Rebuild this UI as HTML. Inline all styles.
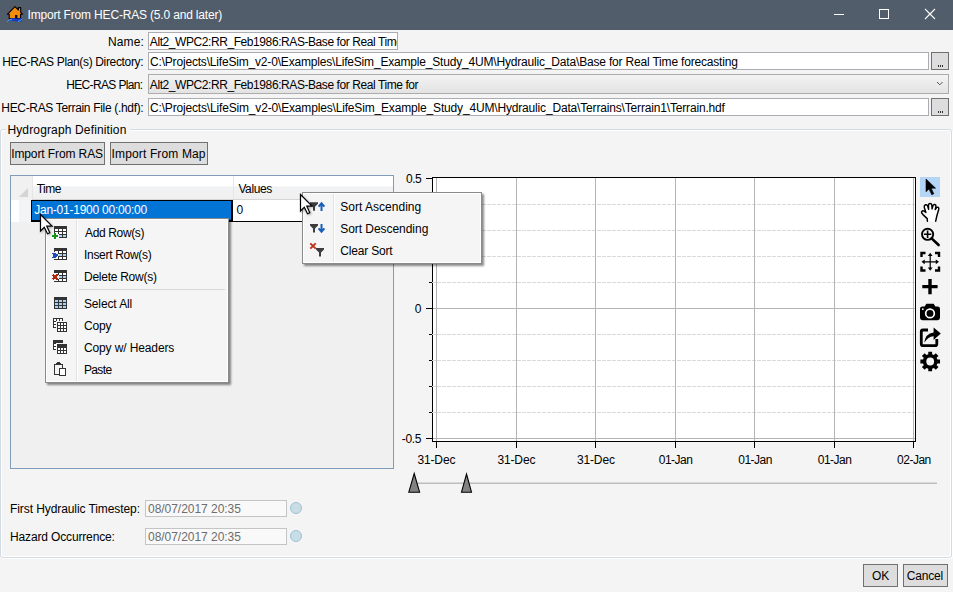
<!DOCTYPE html>
<html><head><meta charset="utf-8">
<style>
*{margin:0;padding:0;box-sizing:border-box}
html,body{width:953px;height:592px;overflow:hidden;background:#f4f4f4;font-family:"Liberation Sans",sans-serif;font-size:12px;color:#000}
.a{position:absolute}
.t{position:absolute;white-space:pre;line-height:14px}
.tb{position:absolute;border:1px solid #abadb3;background:#fff}
.btn{position:absolute;border:1px solid #707070;background:#dddddd}
.menu{position:absolute;border:1px solid #8a8a8a;background:#f5f5f5;box-shadow:inset 1px 1px 0 #fff,inset -1px -1px 0 #fff,2px 2px 2px rgba(0,0,0,0.45)}
.hl{position:absolute;height:1px}
.vl{position:absolute;width:1px}
</style></head><body>
<!-- title bar -->
<div class="a" style="left:0;top:0;width:953px;height:30px;background:#525d6b"></div>
<svg class="a" style="left:0;top:0" width="30" height="30" viewBox="0 0 30 30">
  <path d="M7.3 14.3 L15 6.6 L18.4 10 L18.4 7.6 L20.7 7.6 L20.7 12.3 L22.6 14.2 L20.5 14.2 L20.5 18.5 L9.2 18.5 L9.2 14.3 Z" fill="#f28c0c" stroke="#000" stroke-width="1.1" stroke-linejoin="round"/>
  <rect x="15" y="15" width="2.4" height="3.5" fill="#111"/>
  <path d="M7 21.8 Q10 17.2 15 18.2 Q19.5 19.2 22.2 17.4 Q22.4 20.5 21.3 21.6 Q17.5 22.2 14 21 Q10 20 7 21.8 Z" fill="#1a3cc0"/>
  <path d="M7 21.8 Q9 19.3 12 19.3" stroke="#4aa8e8" stroke-width="1" fill="none"/>
  <path d="M18 21.4 Q20.5 21.2 22.2 18.6" stroke="#4aa8e8" stroke-width="1" fill="none"/>
</svg>
<div class="t" style="left:27.5px;top:8px;letter-spacing:-0.174px;color:#fff;">Import From HEC-RAS (5.0 and later)</div>
<div class="a" style="left:834px;top:14px;width:10px;height:1px;background:#fff"></div>
<div class="a" style="left:879px;top:9px;width:10px;height:10px;border:1px solid #fff"></div>
<svg class="a" style="left:924px;top:8px" width="13" height="13" viewBox="0 0 13 13"><path d="M1 1L11 11M11 1L1 11" stroke="#fff" stroke-width="1.1"/></svg>

<!-- form rows -->
<div class="t" style="left:107.9px;top:35px;letter-spacing:0.150px;color:#000;">Name:</div>
<div class="tb" style="left:148px;top:32px;width:250px;height:18px;overflow:hidden"><div class="t" style="left:0.8px;top:2px;letter-spacing:-0.420px">Alt2_WPC2:RR_Feb1986:RAS-Base for Real Time</div></div>
<div class="t" style="left:2.2px;top:55px;letter-spacing:-0.348px;color:#000;">HEC-RAS Plan(s) Directory:</div>
<div class="tb" style="left:148px;top:52px;width:781px;height:18px"></div>
<div class="t" style="left:150.0px;top:55px;letter-spacing:-0.183px;color:#000;">C:\Projects\LifeSim_v2-0\Examples\LifeSim_Example_Study_4UM\Hydraulic_Data\Base for Real Time forecasting</div>
<div class="btn" style="left:931px;top:52px;width:18px;height:18px"><div class="a" style="left:6px;top:12px;width:1px;height:2px;background:#333"></div><div class="a" style="left:8px;top:12px;width:1px;height:2px;background:#333"></div><div class="a" style="left:10px;top:12px;width:1px;height:2px;background:#333"></div></div>
<div class="t" style="left:66.2px;top:78px;letter-spacing:-0.642px;color:#000;">HEC-RAS Plan:</div>
<div class="a" style="left:148px;top:74px;width:801px;height:20px;border:1px solid #acacac;background:linear-gradient(#f4f4f4 0,#ededed 35%,#e3e3e3 100%)">
<svg class="a" style="left:787px;top:6px" width="8" height="6" viewBox="0 0 8 6"><path d="M1 1L3.8 3.8L6.6 1" fill="none" stroke="#555" stroke-width="1"/></svg></div>
<div class="t" style="left:149.8px;top:78px;letter-spacing:-0.420px;color:#000;">Alt2_WPC2:RR_Feb1986:RAS-Base for Real Time for</div>
<div class="t" style="left:1.3px;top:101px;letter-spacing:-0.326px;color:#000;">HEC-RAS Terrain File (.hdf):</div>
<div class="tb" style="left:148px;top:98px;width:781px;height:18px"></div>
<div class="t" style="left:150.0px;top:101px;letter-spacing:-0.168px;color:#000;">C:\Projects\LifeSim_v2-0\Examples\LifeSim_Example_Study_4UM\Hydraulic_Data\Terrains\Terrain1\Terrain.hdf</div>
<div class="btn" style="left:931px;top:98px;width:18px;height:18px"><div class="a" style="left:6px;top:12px;width:1px;height:2px;background:#333"></div><div class="a" style="left:8px;top:12px;width:1px;height:2px;background:#333"></div><div class="a" style="left:10px;top:12px;width:1px;height:2px;background:#333"></div></div>

<!-- group box -->
<div class="a" style="left:0px;top:129px;width:952px;height:429px;border:1px solid #d0dbe3;border-radius:3px;box-shadow:inset 1px 1px 0 #fff,inset -1px -1px 0 #fff,1px 1px 0 #fff"></div>
<div class="a" style="left:6px;top:124px;width:124px;height:10px;background:#f4f4f4"></div>
<div class="t" style="left:7.4px;top:123px;letter-spacing:0.145px;color:#000;">Hydrograph Definition</div>
<div class="btn" style="left:10px;top:142px;width:95px;height:23px"></div>
<div class="t" style="left:11.2px;top:147px;letter-spacing:-0.107px;color:#000;">Import From RAS</div>
<div class="btn" style="left:110px;top:142px;width:98px;height:23px"></div>
<div class="t" style="left:111.6px;top:147px;letter-spacing:0.136px;color:#000;">Import From Map</div>

<!-- grid -->
<div class="a" style="left:10px;top:175px;width:384px;height:294px;border:1px solid #7f9db9;background:#f0f0f0"></div>
<div class="a" style="left:11px;top:176px;width:382px;height:24px;background:linear-gradient(#ffffff 0%,#ffffff 40%,#f1f2f4 45%,#f0f0f0 100%)"></div>
<div class="a" style="left:11px;top:176px;width:21px;height:45px;background:#f1f1f1"></div>
<div class="a" style="left:11px;top:200px;width:20px;height:22px;background:linear-gradient(to right,#fff 0,#fff 8px,#f3f4f6 8px,#f3f4f6 100%)"></div>
<svg class="a" style="left:17px;top:186px" width="12" height="12" viewBox="0 0 12 12"><path d="M11 2 L11 11 L2 11 Z" fill="#d4d4d4"/></svg>
<div class="vl" style="left:32px;top:176px;height:24px;background:#e6e6e6"></div>
<div class="vl" style="left:233px;top:176px;height:24px;background:#e6e6e6"></div>
<div class="hl" style="left:32px;top:199px;width:361px;background:#d5d5d5"></div>
<div class="a" style="left:233px;top:200px;width:160px;height:22px;background:#fff"></div>
<div class="a" style="left:31px;top:200px;width:202px;height:22px;background:#0274d6;border:1px solid #000;border-right-width:2px;border-bottom-width:2px"></div>
<div class="hl" style="left:233px;top:221px;width:160px;background:#000"></div>
<div class="t" style="left:36.8px;top:182px;letter-spacing:-0.567px;color:#000;">Time</div>
<div class="t" style="left:238.4px;top:182px;letter-spacing:-0.380px;color:#000;">Values</div>
<div class="t" style="left:34.2px;top:203px;letter-spacing:-0.237px;color:#fff;">Jan-01-1900 00:00:00</div>
<div class="t" style="left:236.5px;top:203px;letter-spacing:0.000px;color:#000;">0</div>

<!-- chart -->
<div class="a" style="left:432px;top:177px;width:484px;height:265px;border:1px solid #000;background:#fff"></div>
<div id="chartgrid"></div>
<svg class="a" style="left:0;top:0" width="953" height="592">
  <g stroke="#dadada" stroke-width="1" stroke-dasharray="4,1">
    <line x1="432" y1="204.5" x2="915" y2="204.5"/>
    <line x1="432" y1="230.5" x2="915" y2="230.5"/>
    <line x1="432" y1="256.5" x2="915" y2="256.5"/>
    <line x1="432" y1="282.5" x2="915" y2="282.5"/>
    <line x1="432" y1="334.5" x2="915" y2="334.5"/>
    <line x1="432" y1="360.5" x2="915" y2="360.5"/>
    <line x1="432" y1="386.5" x2="915" y2="386.5"/>
    <line x1="432" y1="412.5" x2="915" y2="412.5"/>
  </g>
  <g stroke="#b4b4b4" stroke-width="1">
    <line x1="433" y1="308.5" x2="915" y2="308.5"/>
    <line x1="433" y1="438.5" x2="915" y2="438.5"/>
    <line x1="436.5" y1="178" x2="436.5" y2="441"/>
    <line x1="516.5" y1="178" x2="516.5" y2="441"/>
    <line x1="595.5" y1="178" x2="595.5" y2="441"/>
    <line x1="675.5" y1="178" x2="675.5" y2="441"/>
    <line x1="754.5" y1="178" x2="754.5" y2="441"/>
    <line x1="834.5" y1="178" x2="834.5" y2="441"/>
    <line x1="913.5" y1="178" x2="913.5" y2="441"/>
  </g>
  <g stroke="#000" stroke-width="1">
    <line x1="426" y1="178.5" x2="432" y2="178.5"/>
    <line x1="426" y1="308.5" x2="432" y2="308.5"/>
    <line x1="426" y1="438.5" x2="432" y2="438.5"/>
    <line x1="429" y1="204.5" x2="432" y2="204.5"/>
    <line x1="429" y1="230.5" x2="432" y2="230.5"/>
    <line x1="429" y1="256.5" x2="432" y2="256.5"/>
    <line x1="429" y1="282.5" x2="432" y2="282.5"/>
    <line x1="429" y1="334.5" x2="432" y2="334.5"/>
    <line x1="429" y1="360.5" x2="432" y2="360.5"/>
    <line x1="429" y1="386.5" x2="432" y2="386.5"/>
    <line x1="429" y1="412.5" x2="432" y2="412.5"/>
    <line x1="436.5" y1="442" x2="436.5" y2="448"/>
    <line x1="516.5" y1="442" x2="516.5" y2="448"/>
    <line x1="595.5" y1="442" x2="595.5" y2="448"/>
    <line x1="675.5" y1="442" x2="675.5" y2="448"/>
    <line x1="754.5" y1="442" x2="754.5" y2="448"/>
    <line x1="834.5" y1="442" x2="834.5" y2="448"/>
    <line x1="913.5" y1="442" x2="913.5" y2="448"/>
  </g>
  <!-- slider -->
  <line x1="417" y1="483.3" x2="937" y2="483.3" stroke="#bdbdbd" stroke-width="1.4"/>
  <path d="M414.2 473.5 L419.6 492.2 L408.8 492.2 Z" fill="#828282" stroke="#000" stroke-width="1.1" stroke-linejoin="miter"/>
  <path d="M466.5 474 L471.5 492.2 L461.5 492.2 Z" fill="#828282" stroke="#000" stroke-width="1.1" stroke-linejoin="miter"/>
</svg>
<div class="t" style="left:406.0px;top:172px;letter-spacing:-0.500px;color:#000;">0.5</div><div class="t" style="left:414.8px;top:302px;letter-spacing:0.000px;color:#000;">0</div><div class="t" style="left:401.8px;top:432px;letter-spacing:-0.333px;color:#000;">-0.5</div>
<div class="t" style="left:417.4px;top:453px;letter-spacing:-0.120px;color:#000;">31-Dec</div><div class="t" style="left:497.4px;top:453px;letter-spacing:-0.120px;color:#000;">31-Dec</div><div class="t" style="left:576.9px;top:453px;letter-spacing:-0.120px;color:#000;">31-Dec</div><div class="t" style="left:658.7px;top:453px;letter-spacing:-0.480px;color:#000;">01-Jan</div><div class="t" style="left:738.2px;top:453px;letter-spacing:-0.480px;color:#000;">01-Jan</div><div class="t" style="left:817.7px;top:453px;letter-spacing:-0.480px;color:#000;">01-Jan</div><div class="t" style="left:897.1px;top:453px;letter-spacing:-0.500px;color:#000;">02-Jan</div>

<!-- toolbar -->
<div class="a" style="left:920px;top:177px;width:20px;height:20px;background:#b4d5f5"></div>
<svg class="a" style="left:0;top:0" width="953" height="592">
  <path d="M926 179 L926 191.8 L929 189 L931.8 194.8 L933.8 193.8 L931.2 188.2 L935.6 188.2 Z" fill="#000" stroke="#000" stroke-width="0.6" stroke-linejoin="round"/>
  <path d="M927.4 221.2 L927.2 218.6 Q925 216.5 923 214.6 Q921 212.6 921.8 211.4 Q922.8 210.3 924.5 211.4 L925.9 212.4 L924.3 207.6 Q923.9 205.4 925.5 204.8 Q927.1 204.4 927.7 206.2 L928.6 209.2 L928.5 205.1 Q928.6 203.4 930.1 203.4 Q931.6 203.4 931.8 205 L932.1 208.9 L933 205.6 Q933.5 204.2 934.8 204.5 Q936.2 205 935.9 206.6 L935.2 209.6 L936.6 207.6 Q937.4 206.8 938.3 207.4 Q939.1 208 938.7 209.5 L936.8 216 L935.7 221.2" fill="#fff" stroke="#000" stroke-width="1.45" stroke-linejoin="round" stroke-linecap="round"/>
  <circle cx="927.6" cy="234.3" r="5.6" fill="none" stroke="#000" stroke-width="1.9"/>
  <path d="M927.6 230.6 V238 M923.9 234.3 H931.3" stroke="#000" stroke-width="1.6"/>
  <path d="M931.6 238.4 L938.6 245" stroke="#000" stroke-width="2.6" stroke-linecap="round"/>
  <path d="M921.5 257 V253 H925.5 M935 253 H939 V257 M939 266.5 V270.5 H935 M925.5 270.5 H921.5 V266.5" fill="none" stroke="#000" stroke-width="2.4"/>
  <path d="M930.2 255 V269 M923 261.8 H937.4" stroke="#000" stroke-width="1.2"/>
  <path d="M930.2 252.8 L927.8 256 H932.6 Z M930.2 270.8 L927.8 267.6 H932.6 Z M921.5 261.8 L924.7 259.4 V264.2 Z M939 261.8 L935.8 259.4 V264.2 Z" fill="#000"/>
  <path d="M930 279 V294.3 M922.3 286.6 H937.6" stroke="#000" stroke-width="3.4"/>
  <path d="M920 309 Q920 306.6 922.4 306.6 H924.6 L926.4 303.8 H933.6 L935.4 306.6 H937.6 Q940 306.6 940 309 V317.8 Q940 320.2 937.6 320.2 H922.4 Q920 320.2 920 317.8 Z" fill="#000"/>
  <circle cx="930" cy="313.4" r="4.3" fill="none" stroke="#fff" stroke-width="1.7"/>
  <circle cx="922.8" cy="309.2" r="0.9" fill="#fff"/>
  <path d="M928 330 H923 Q921.3 330 921.3 331.7 V343.9 Q921.3 345.6 923 345.6 H935.1 Q936.8 345.6 936.8 343.9 V339" fill="none" stroke="#000" stroke-width="2.8"/>
  <path d="M924.3 342.8 Q925.3 333.3 933.6 332.4 V327.4 L940.8 333.6 L933.6 339.9 V336.2 Q928.3 336 924.3 342.8 Z" fill="#000"/>
  <path d="M928.28 354.35 L928.29 351.68 L932.11 351.68 L932.12 354.35 L933.90 355.09 L935.79 353.21 L938.49 355.91 L936.61 357.80 L937.35 359.58 L940.02 359.59 L940.02 363.41 L937.35 363.42 L936.61 365.20 L938.49 367.09 L935.79 369.79 L933.90 367.91 L932.12 368.65 L932.11 371.32 L928.29 371.32 L928.28 368.65 L926.50 367.91 L924.61 369.79 L921.91 367.09 L923.79 365.20 L923.05 363.42 L920.38 363.41 L920.38 359.59 L923.05 359.58 L923.79 357.80 L921.91 355.91 L924.61 353.21 L926.50 355.09 Z" fill="#000"/>
  <circle cx="930.2" cy="361.5" r="3.9" fill="#f4f4f4"/>
</svg>

<!-- bottom fields -->
<div class="t" style="left:10.0px;top:502px;letter-spacing:-0.083px;color:#000;">First Hydraulic Timestep:</div>
<div class="tb" style="left:145px;top:500px;width:142px;height:17px;border-color:#c4c4c4;background:#f9f9f9"></div>
<div class="t" style="left:148.0px;top:502px;letter-spacing:-0.033px;color:#6d6d6d;">08/07/2017 20:35</div>
<div class="a" style="left:290px;top:502px;width:12px;height:12px;border-radius:50%;background:#c9dde6;border:1px solid #9fc3d3"></div>
<div class="t" style="left:10.0px;top:530px;letter-spacing:-0.147px;color:#000;">Hazard Occurrence:</div>
<div class="tb" style="left:145px;top:528px;width:142px;height:17px;border-color:#c4c4c4;background:#f9f9f9"></div>
<div class="t" style="left:148.0px;top:530px;letter-spacing:-0.033px;color:#6d6d6d;">08/07/2017 20:35</div>
<div class="a" style="left:290px;top:530px;width:12px;height:12px;border-radius:50%;background:#c9dde6;border:1px solid #9fc3d3"></div>

<div class="btn" style="left:863px;top:564px;width:35px;height:23px"></div>
<div class="t" style="left:872.0px;top:569px;letter-spacing:0.000px;color:#000;">OK</div>
<div class="btn" style="left:903px;top:564px;width:45px;height:23px"></div>
<div class="t" style="left:906.8px;top:569px;letter-spacing:-0.200px;color:#000;">Cancel</div>

<!-- context menu 1 -->
<div class="menu" style="left:45px;top:218px;width:184px;height:165px"></div>
<div class="vl" style="left:76px;top:220px;height:161px;background:#e2e2e2"></div><div class="vl" style="left:77px;top:220px;height:161px;background:#fff"></div>
<div class="hl" style="left:79px;top:289px;width:146px;background:#d8d8d8"></div>
<div class="t" style="left:85.0px;top:226px;letter-spacing:-0.356px;color:#000;">Add Row(s)</div><div class="t" style="left:84.0px;top:248px;letter-spacing:-0.300px;color:#000;">Insert Row(s)</div><div class="t" style="left:84.0px;top:270px;letter-spacing:-0.258px;color:#000;">Delete Row(s)</div><div class="t" style="left:83.9px;top:297px;letter-spacing:-0.111px;color:#000;">Select All</div><div class="t" style="left:83.9px;top:319px;letter-spacing:-0.167px;color:#000;">Copy</div><div class="t" style="left:83.9px;top:341px;letter-spacing:-0.114px;color:#000;">Copy w/ Headers</div><div class="t" style="left:83.9px;top:363px;letter-spacing:-0.625px;color:#000;">Paste</div>
<svg class="a" style="left:0;top:0" width="953" height="592" shape-rendering="crispEdges"><rect x="54" y="226" width="13" height="12" fill="#333"/><rect x="55.00" y="229" width="3.00" height="2" fill="#fff"/><rect x="59.00" y="229" width="3.00" height="2" fill="#fff"/><rect x="63.00" y="229" width="3.00" height="2" fill="#fff"/><rect x="55.00" y="232" width="3.00" height="2" fill="#fff"/><rect x="59.00" y="232" width="3.00" height="2" fill="#fff"/><rect x="63.00" y="232" width="3.00" height="2" fill="#fff"/><rect x="55.00" y="235" width="3.00" height="2" fill="#a9d2f5"/><rect x="59.00" y="235" width="3.00" height="2" fill="#a9d2f5"/><rect x="63.00" y="235" width="3.00" height="2" fill="#a9d2f5"/><path d="M51.6 236 H58.6 M55.1 232.5 V239.5" stroke="#f5f5f5" stroke-width="4.6"/><path d="M52 236 H58.2 M55.1 232.9 V239.1" stroke="#17931a" stroke-width="2.5"/><rect x="54" y="248" width="13" height="12" fill="#333"/><rect x="55.00" y="251" width="3.00" height="2" fill="#fff"/><rect x="59.00" y="251" width="3.00" height="2" fill="#fff"/><rect x="63.00" y="251" width="3.00" height="2" fill="#fff"/><rect x="55.00" y="254" width="3.00" height="2" fill="#a9d2f5"/><rect x="59.00" y="254" width="3.00" height="2" fill="#a9d2f5"/><rect x="63.00" y="254" width="3.00" height="2" fill="#a9d2f5"/><rect x="55.00" y="257" width="3.00" height="2" fill="#fff"/><rect x="59.00" y="257" width="3.00" height="2" fill="#fff"/><rect x="63.00" y="257" width="3.00" height="2" fill="#fff"/><path d="M52 252.6 H55.3 L58.4 255.1 L55.3 257.7 H52 L53.2 255.1 Z" fill="#1850b8" stroke="#f5f5f5" stroke-width="2.2" paint-order="stroke" stroke-linejoin="round"/><rect x="54" y="270" width="13" height="12" fill="#333"/><rect x="55.00" y="273" width="3.00" height="2" fill="#fff"/><rect x="59.00" y="273" width="3.00" height="2" fill="#fff"/><rect x="63.00" y="273" width="3.00" height="2" fill="#fff"/><rect x="55.00" y="276" width="3.00" height="2" fill="#a9d2f5"/><rect x="59.00" y="276" width="3.00" height="2" fill="#a9d2f5"/><rect x="63.00" y="276" width="3.00" height="2" fill="#a9d2f5"/><rect x="55.00" y="279" width="3.00" height="2" fill="#fff"/><rect x="59.00" y="279" width="3.00" height="2" fill="#fff"/><rect x="63.00" y="279" width="3.00" height="2" fill="#fff"/><path d="M52.4 274.3 L57.8 279.7 M57.8 274.3 L52.4 279.7" stroke="#f5f5f5" stroke-width="4.4"/><path d="M52.6 274.5 L57.6 279.5 M57.6 274.5 L52.6 279.5" stroke="#b3260c" stroke-width="2.5"/><rect x="54" y="276" width="2.2" height="2" fill="#b3260c"/><rect x="54" y="297" width="13" height="12" fill="#333"/><rect x="55.00" y="300" width="3.00" height="2" fill="#a9d2f5"/><rect x="59.00" y="300" width="3.00" height="2" fill="#a9d2f5"/><rect x="63.00" y="300" width="3.00" height="2" fill="#a9d2f5"/><rect x="55.00" y="303" width="3.00" height="2" fill="#a9d2f5"/><rect x="59.00" y="303" width="3.00" height="2" fill="#a9d2f5"/><rect x="63.00" y="303" width="3.00" height="2" fill="#a9d2f5"/><rect x="55.00" y="306" width="3.00" height="2" fill="#a9d2f5"/><rect x="59.00" y="306" width="3.00" height="2" fill="#a9d2f5"/><rect x="63.00" y="306" width="3.00" height="2" fill="#a9d2f5"/><rect x="53" y="318" width="10" height="10" fill="#333"/><rect x="54" y="319" width="2" height="2" fill="#fff"/><rect x="57" y="319" width="2" height="2" fill="#fff"/><rect x="60" y="319" width="2" height="2" fill="#fff"/><rect x="54" y="322" width="2" height="2" fill="#fff"/><rect x="54" y="325" width="2" height="2" fill="#fff"/><rect x="56" y="321" width="12" height="12" fill="#f5f5f5"/><rect x="57" y="322" width="10" height="10" fill="#333"/><rect x="58" y="323" width="2" height="2" fill="#fff"/><rect x="61" y="323" width="2" height="2" fill="#fff"/><rect x="64" y="323" width="2" height="2" fill="#fff"/><rect x="58" y="326" width="2" height="2" fill="#fff"/><rect x="61" y="326" width="2" height="2" fill="#fff"/><rect x="64" y="326" width="2" height="2" fill="#fff"/><rect x="58" y="329" width="2" height="2" fill="#fff"/><rect x="61" y="329" width="2" height="2" fill="#fff"/><rect x="64" y="329" width="2" height="2" fill="#fff"/><rect x="53" y="340" width="10" height="10" fill="#333"/><rect x="54" y="344" width="2" height="2" fill="#fff"/><rect x="54" y="347" width="2" height="2" fill="#fff"/><rect x="56" y="343" width="12" height="12" fill="#f5f5f5"/><rect x="57" y="344" width="10" height="10" fill="#333"/><rect x="58" y="348" width="2" height="2" fill="#fff"/><rect x="61" y="348" width="2" height="2" fill="#fff"/><rect x="64" y="348" width="2" height="2" fill="#fff"/><rect x="58" y="351" width="2" height="2" fill="#fff"/><rect x="61" y="351" width="2" height="2" fill="#fff"/><rect x="64" y="351" width="2" height="2" fill="#fff"/><g fill="none" stroke="#333" stroke-width="1" shape-rendering="crispEdges"><path d="M56.5 364.5 H54.5 V374.5 H59.5"/><path d="M60.5 364.5 H62.5 V368.5"/></g><rect x="56" y="363" width="5" height="2" fill="#333"/><rect x="57" y="362" width="3" height="1" fill="#333"/><rect x="59.5" y="368.5" width="6" height="7" fill="#fff" stroke="#333" stroke-width="1"/></svg>

<!-- context menu 2 -->
<div class="menu" style="left:302px;top:192px;width:180px;height:72px"></div>
<div class="vl" style="left:333px;top:194px;height:68px;background:#e2e2e2"></div><div class="vl" style="left:334px;top:194px;height:68px;background:#fff"></div>
<div class="t" style="left:340.2px;top:200px;letter-spacing:0.023px;color:#000;">Sort Ascending</div><div class="t" style="left:340.2px;top:222px;letter-spacing:-0.043px;color:#000;">Sort Descending</div><div class="t" style="left:340.2px;top:244px;letter-spacing:-0.178px;color:#000;">Clear Sort</div>
<svg class="a" style="left:0;top:0" width="953" height="592"><path d="M310 202.3 H318 V203.8 L315 206.8 V210.8 H313 V206.8 L310 203.8 Z" fill="#3d3d3d"/><path d="M321.5 211 V204 M318.6 206.6 L321.5 203.3 L324.4 206.6" stroke="#1560bd" stroke-width="2" fill="none"/><path d="M310 224 H318 V225.5 L315 228.5 V232.5 H313 V228.5 L310 225.5 Z" fill="#3d3d3d"/><path d="M321.5 224 V231 M318.6 228.4 L321.5 231.7 L324.4 228.4" stroke="#1560bd" stroke-width="2" fill="none"/><path d="M316 248 H324 V249.5 L321 252.5 V256.5 H319 V252.5 L316 249.5 Z" fill="#3d3d3d"/><path d="M310.3 243.3 L315.7 248.7 M315.7 243.3 L310.3 248.7" stroke="#c0301a" stroke-width="1.9"/></svg>

<!-- cursors -->
<svg class="a" style="left:39px;top:213px;filter:drop-shadow(1px 1px 1px rgba(0,0,0,.3))" width="16" height="24" viewBox="0 0 16 24">
  <path d="M1.5 1.5 V18 L5.3 14.3 L8.5 20.8 L10.8 19.8 L7.8 13.2 L13 13.2 Z" fill="#fff" stroke="#000" stroke-width="1.2" stroke-linejoin="miter"/>
</svg>
<svg class="a" style="left:299px;top:193px;filter:drop-shadow(1px 1px 1px rgba(0,0,0,.3))" width="16" height="24" viewBox="0 0 16 24">
  <path d="M1.5 1.5 V18 L5.3 14.3 L8.5 20.8 L10.8 19.8 L7.8 13.2 L13 13.2 Z" fill="#fff" stroke="#000" stroke-width="1.2" stroke-linejoin="miter"/>
</svg>
</body></html>
